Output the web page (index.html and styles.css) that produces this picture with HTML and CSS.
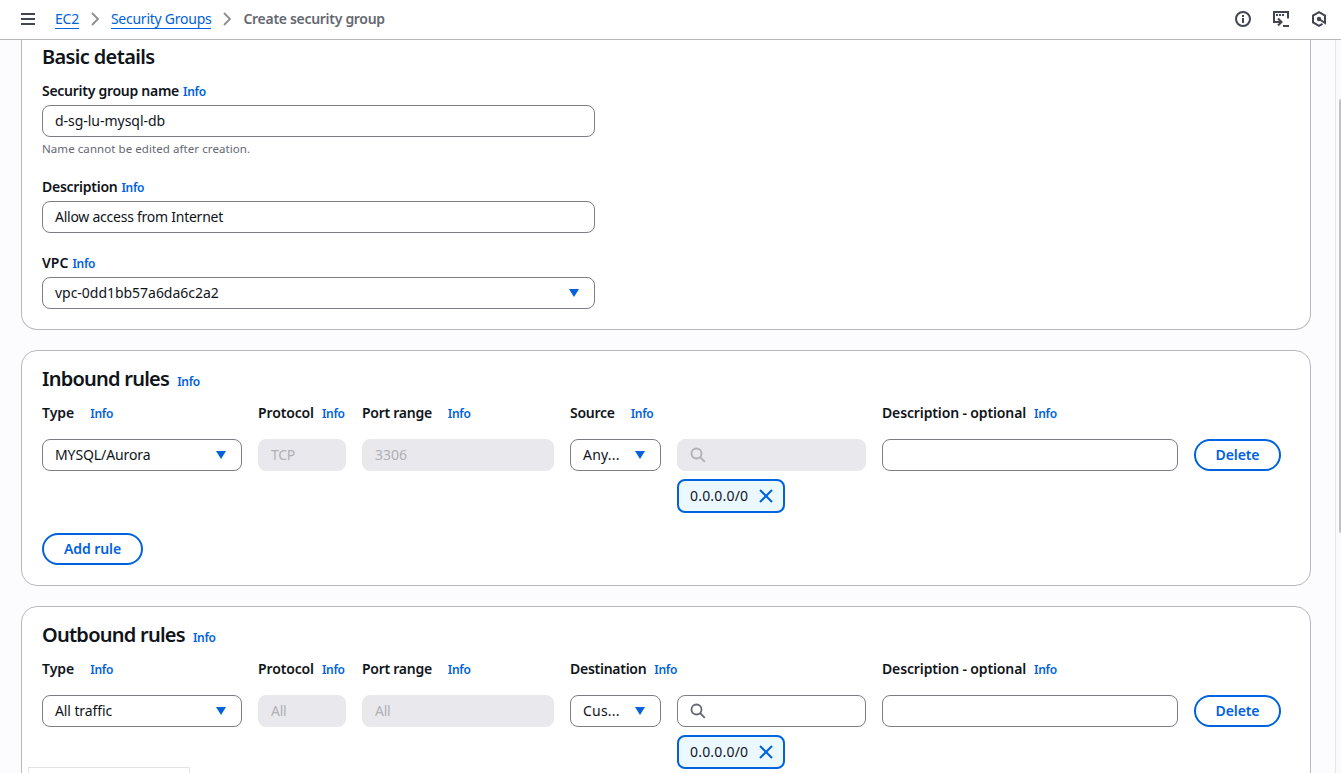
FILE: index.html
```html
<!DOCTYPE html>
<html lang="en">

<head>
    <meta charset="UTF-8">
    <title>Create security group | EC2</title>
    <link rel="stylesheet" href="styles.css">
</head>

<body>
    <header class="topbar">
        <svg class="menu" width="14" height="12" viewBox="0 0 14 12"><path d="M0 1h14M0 6h14M0 11h14" stroke="#424650" stroke-width="2"/></svg>
        <nav class="crumbs">
            <a class="ec2">EC2</a>
            <svg width="8" height="14" viewBox="0 0 8 14"><path d="M1 1l6 6-6 6" fill="none" stroke="#8c8c94" stroke-width="1.800"/></svg>
            <a class="groups">Security Groups</a>
            <svg width="8" height="14" viewBox="0 0 8 14"><path d="M1 1l6 6-6 6" fill="none" stroke="#8c8c94" stroke-width="1.800"/></svg>
            <span class="current">Create security group</span>
        </nav>
        <div class="tools">
            <svg width="16" height="16" viewBox="0 0 16 16" fill="none" stroke="#424650" stroke-width="2"><circle cx="8" cy="8" r="7"/><path d="M8 7v5M8 4v2"/></svg>
            <svg width="16" height="16" viewBox="0 0 16 16" fill="none" stroke="#424650" stroke-width="2"><path d="M1 12V1h14v6.500M10 15h6M2 11h6M5 7.500L8.500 11 5 14.500"/><path d="M3 4h8" stroke-dasharray="2 1"/></svg>
            <svg width="16" height="16" viewBox="0 0 16 16" fill="none" stroke="#424650" stroke-width="2"><path d="M14 9V4.600L8 1.200 2 4.600v6.800l6 3.400 3.500-2"/><circle cx="8" cy="8" r="2.200" fill="#424650" stroke="none"/><path d="M8 8l6 4V8"/></svg>
        </div>
    </header>

    <main class="page">
        <div class="content">
            <!-- Basic details -->
            <section class="card basic">
                <h2>Basic details</h2>
                <div class="field">
                    <div class="label"><b>Security group name</b><a class="info">Info</a></div>
                    <div class="input"><span class="value-name">d-sg-lu-mysql-db</span></div>
                    <div class="hint">Name cannot be edited after creation.</div>
                </div>
                <div class="field">
                    <div class="label"><b>Description</b><a class="info">Info</a></div>
                    <div class="input"><span class="value-desc">Allow access from Internet</span></div>
                </div>
                <div class="field">
                    <div class="label"><b class="vpc">VPC</b><a class="info">Info</a></div>
                    <div class="input select"><span class="value-vpc">vpc-0dd1bb57a6da6c2a2</span><i class="arrow"></i></div>
                </div>
            </section>

            <!-- Inbound rules -->
            <section class="card rules">
                <div class="title"><h2>Inbound rules</h2><a class="info">Info</a></div>
                <div class="grid heads">
                    <div class="head wide"><b class="type">Type</b><a class="info">Info</a></div>
                    <div class="head"><b class="protocol">Protocol</b><a class="info">Info</a></div>
                    <div class="head wide"><b>Port range</b><a class="info">Info</a></div>
                    <div class="head wide span2"><b>Source</b><a class="info">Info</a></div>
                    <div class="head"><b class="optional">Description - optional</b><a class="info">Info</a></div>
                </div>
                <div class="grid">
                    <div class="input select"><span class="value-type">MYSQL/Aurora</span><i class="arrow"></i></div>
                    <div class="input disabled">TCP</div>
                    <div class="input disabled port">3306</div>
                    <div class="input select"><span class="short">Any...</span><i class="arrow"></i></div>
                    <div>
                        <div class="input disabled"><svg width="16" height="16" viewBox="0 0 16 16" fill="none" stroke="#b0b0b5" stroke-width="1.800"><circle cx="6.500" cy="6.500" r="5"/><path d="M10 10l4.800 4.800"/></svg></div>
                        <div class="token"><span>0.0.0.0/0</span><svg width="14" height="14" viewBox="0 0 14 14"><path d="M1 1l12 12M13 1L1 13" stroke="#0062dd" stroke-width="2"/></svg></div>
                    </div>
                    <div class="input"></div>
                    <button class="btn">Delete</button>
                </div>
                <button class="btn add">Add rule</button>
            </section>

            <!-- Outbound rules -->
            <section class="card rules">
                <div class="title"><h2>Outbound rules</h2><a class="info">Info</a></div>
                <div class="grid heads">
                    <div class="head wide"><b class="type">Type</b><a class="info">Info</a></div>
                    <div class="head"><b class="protocol">Protocol</b><a class="info">Info</a></div>
                    <div class="head wide"><b>Port range</b><a class="info">Info</a></div>
                    <div class="head span2"><b>Destination</b><a class="info">Info</a></div>
                    <div class="head"><b class="optional">Description - optional</b><a class="info">Info</a></div>
                </div>
                <div class="grid">
                    <div class="input select"><span class="value-type">All traffic</span><i class="arrow"></i></div>
                    <div class="input disabled">All</div>
                    <div class="input disabled">All</div>
                    <div class="input select"><span class="short">Cus...</span><i class="arrow"></i></div>
                    <div>
                        <div class="input"><svg width="16" height="16" viewBox="0 0 16 16" fill="none" stroke="#656871" stroke-width="1.800"><circle cx="6.500" cy="6.500" r="5"/><path d="M10 10l4.800 4.800"/></svg></div>
                        <div class="token"><span>0.0.0.0/0</span><svg width="14" height="14" viewBox="0 0 14 14"><path d="M1 1l12 12M13 1L1 13" stroke="#0062dd" stroke-width="2"/></svg></div>
                    </div>
                    <div class="input"></div>
                    <button class="btn">Delete</button>
                </div>
            </section>
        </div>
        <div class="scrollbar"><div class="thumb"></div></div>
    </main>
    <div class="status"></div>
</body>

</html>
```
FILE: styles.css
```css
* {
    box-sizing: border-box;
}

body {
    margin: 0;
    height: 773px;
    overflow: hidden;
    font-family: "Noto Sans", sans-serif;
    font-size: 14px;
    line-height: 20px;
    letter-spacing: -0.25px;
    color: #0f141a;
    background: #fcfcfe;
}

.topbar {
    height: 40px;
    padding: 0 14px 2px 21px;
    display: flex;
    align-items: center;
    background: #fff;
    border-bottom: 1px solid #b8b8c0;
}

.crumbs {
    display: flex;
    align-items: center;
    margin-left: 20px;
}

.crumbs svg {
    margin: 0 12px;
}

.crumbs a {
    color: #0062dd;
    line-height: 19px;
    border-bottom: 1px solid #0062dd;
}

.current {
    font-weight: 600;
    letter-spacing: -0.3px;
    color: #656871;
}

.tools {
    display: flex;
    gap: 22px;
    margin-left: auto;
}

.page {
    height: 733px;
    display: flex;
    overflow: hidden;
}

.content {
    flex: 1;
    padding: 0 24px 0 21px;
}

.card {
    background: #fff;
    border: 1px solid #b8b8c0;
    border-radius: 16px;
    padding: 0 20px;
    margin-bottom: 20px;
}

.basic {
    height: 290px;
    border-top: none;
    border-radius: 0 0 16px 16px;
    padding-top: 5px;
}

.rules {
    height: 236px;
    padding-top: 16px;
}

h2 {
    margin: 0;
    font-size: 20px;
    line-height: 24px;
    font-weight: 600;
    letter-spacing: -0.75px;
}

.field {
    width: 553px;
    margin-bottom: 20px;
}

.basic h2 {
    margin-bottom: 12px;
    letter-spacing: -0.65px;
}

.label {
    display: flex;
    gap: 4px;
    height: 20px;
    margin-bottom: 4px;
}

b {
    font-weight: 600;
    letter-spacing: -0.27px;
}

.vpc {
    letter-spacing: 0;
}

.type {
    letter-spacing: 0;
}

.protocol,
.optional {
    letter-spacing: -0.13px;
}

.info {
    font-size: 12px;
    font-weight: 600;
    letter-spacing: -0.3px;
    color: #0062dd;
    position: relative;
    top: 1px;
}

.input {
    height: 32px;
    display: flex;
    align-items: center;
    padding: 0 12px;
    border: 1px solid #7d7d87;
    border-radius: 8px;
    background: #fff;
}

.select {
    justify-content: space-between;
    padding-right: 15px;
}

.value-name,
.value-vpc {
    letter-spacing: -0.03px;
}

.value-type {
    letter-spacing: -0.1px;
}

.short {
    letter-spacing: 0.2px;
}

.arrow {
    border: 5px solid transparent;
    border-top: 8px solid #0062dd;
    border-bottom: 0;
}

.disabled {
    background: #e9e8ed;
    border-color: #e9e8ed;
    color: #b0b0b5;
}

.port {
    letter-spacing: 0;
}

.hint {
    font-size: 11.5px;
    line-height: 16px;
    margin-top: 4px;
    letter-spacing: 0.07px;
    color: #656871;
}

.title {
    display: flex;
    align-items: center;
    gap: 8px;
}

.title .info {
    top: 3px;
}

.grid {
    display: grid;
    grid-template-columns: 200px 88px 192px 91px 189px 296px 87px;
    column-gap: 16px;
    align-items: start;
}

.heads {
    margin: 12px 0 16px;
}

.head {
    display: flex;
    gap: 8px;
    white-space: nowrap;
}

.wide {
    gap: 16px;
}

.span2 {
    grid-column: span 2;
}

.token {
    display: flex;
    align-items: center;
    justify-content: space-between;
    width: 108px;
    height: 34px;
    margin-top: 8px;
    padding: 0 10px 0 11px;
    border: 2px solid #0062dd;
    border-radius: 8px;
    background: #ebf8ff;
    letter-spacing: 0.2px;
}

.btn {
    height: 32px;
    padding: 0 0 1px;
    border: 2px solid #0062dd;
    border-radius: 16px;
    background: #fff;
    color: #0062dd;
    font: 600 14px "Noto Sans", sans-serif;
    letter-spacing: -0.1px;
}

.add {
    width: 101px;
    margin-top: 20px;
}

.scrollbar {
    width: 6px;
    padding: 59px 0 0 3px;
    background: #fafafa;
    border-left: 1px solid #e6e6e6;
}

.thumb {
    height: 434px;
    background: #c1c1c1;
    border-radius: 4px 0 0 4px;
}

/* link preview in the window corner */
.status {
    position: absolute;
    left: 28px;
    top: 767px;
    width: 162px;
    height: 6px;
    background: #fff;
    border: 1px solid #e3e3e6;
    border-bottom: none;
}
```
